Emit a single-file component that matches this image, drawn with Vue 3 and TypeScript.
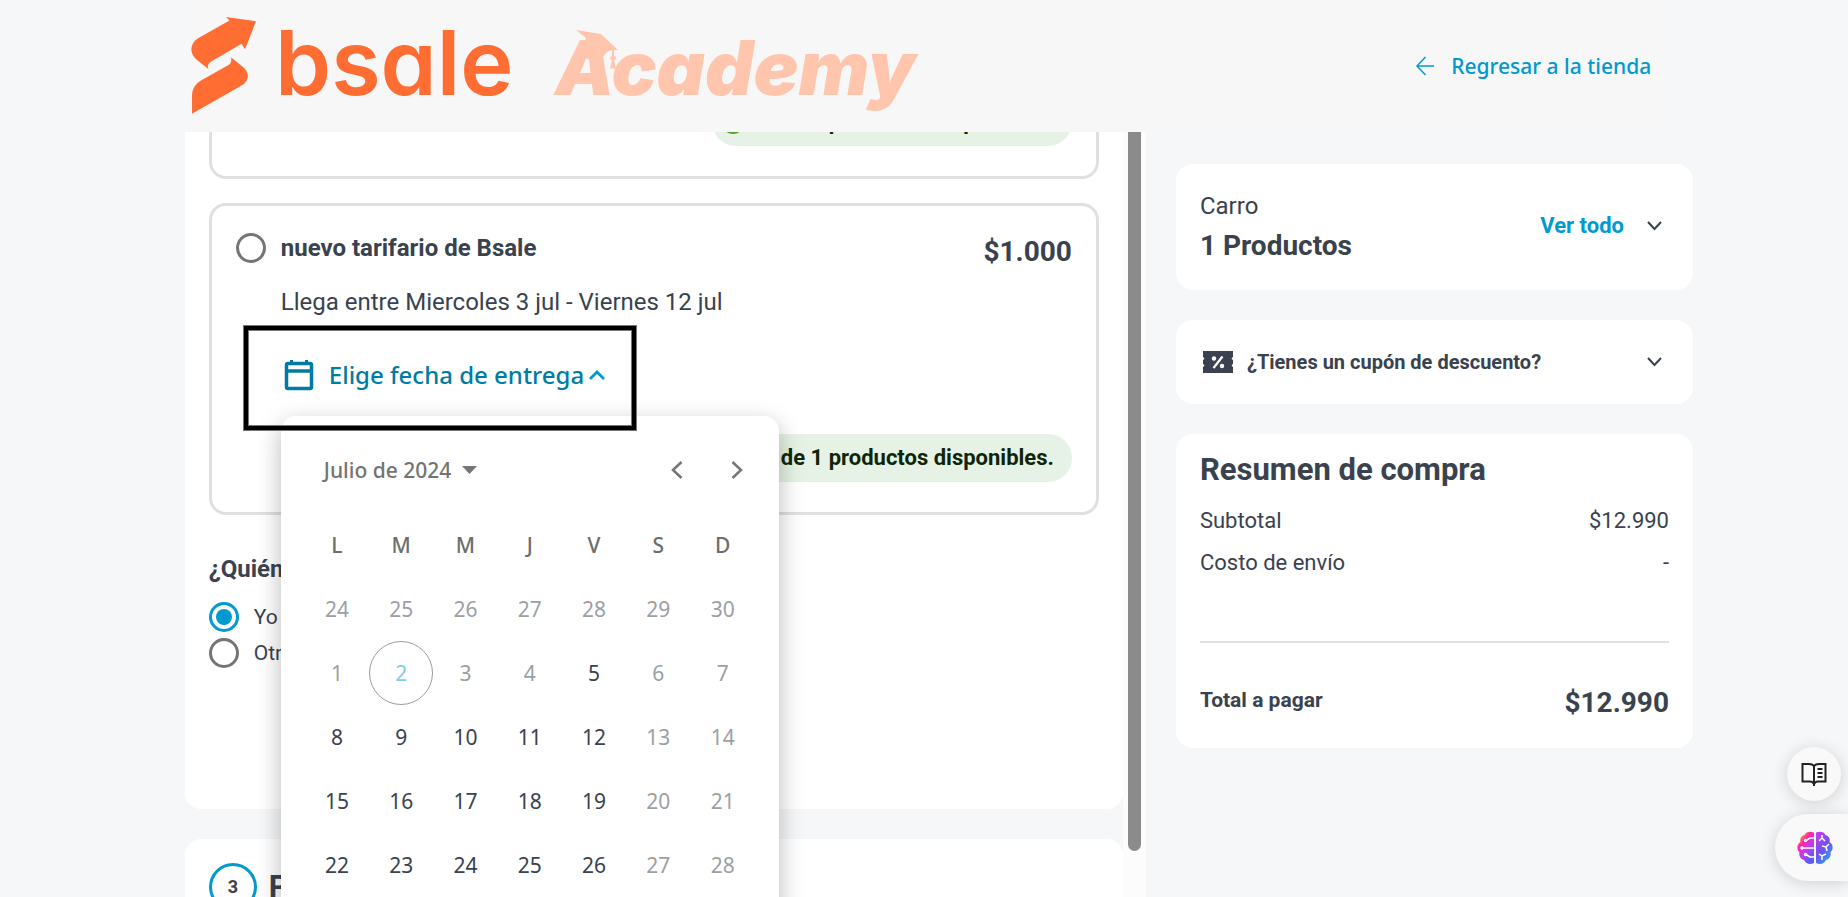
<script setup lang="ts">
import { ref } from 'vue'

interface Day {
  n: number
  enabled: boolean
  today: boolean
}

const weekdays: string[] = ['L', 'M', 'M', 'J', 'V', 'S', 'D']
const available = new Set<number>([5, 8, 9, 10, 11, 12, 15, 16, 17, 18, 19, 22, 23, 24, 25, 26])

const weeks: Day[][] = [
  [24, 25, 26, 27, 28, 29, 30].map((n) => ({ n, enabled: false, today: false })),
  ...[1, 8, 15, 22].map((start) =>
    Array.from({ length: 7 }, (_, i) => {
      const n = start + i
      return { n, enabled: available.has(n), today: n === 2 }
    }),
  ),
]

const receiver = ref<string>('yo')
const rate = ref<string>('')
const open = ref<boolean>(true)
</script>

<template>
  <div class="page">
    <header class="top">
      <svg class="logo" viewBox="0 0 740 132" role="img" aria-label="bsale Academy">
        <g fill="#ff6d33">
          <path d="M41 17L71 21.300L60 49.300L56.600 43.700L27 61C22 64 22.500 67 23.700 69.300L12 60C4.500 54 4 43.500 13.500 38L44.500 20.500Z" />
          <path d="M46 57.300L58 67C65 73 64.500 81 56.500 85.500L7 113.700V97C7 88 10.500 84 16 80.500L43.500 65C46.500 63 46.700 60.500 46 57.300Z" />
          <text class="brand" x="90" y="95">bsale</text>
        </g>
        <g fill="#ffc5ad">
          <text class="academy" x="370" y="95">Academy</text>
          <path d="M391 30L416 34L433 50L428 50C420 51 417 57 417 64L395 56L401 38Z" />
          <path d="M427 50h2v6a2 2 0 0 1 0 4l2 10-3-2-3 1 2-9a2 2 0 0 1 0-4z" />
        </g>
      </svg>
      <a class="back" href="#">
        <svg width="18" height="20" viewBox="0 0 18 20" fill="none" stroke="currentColor" stroke-width="1.500"><path d="M18 10H1M9.500 1L1 10l8.500 9" /></svg>
        Regresar a la tienda
      </a>
    </header>

    <main class="cols">
      <div class="scroller">
        <div class="steps">
          <section class="step delivery">
            <div class="option prev">
              <p class="pill">
                <svg width="24" height="24" viewBox="0 0 24 24"><circle cx="12" cy="12" r="12" fill="#55a02c" /><path d="M6 12l4 4 8-8" fill="none" stroke="#fff" stroke-width="2" /></svg>
                1 de 1 productos disponibles.
              </p>
            </div>
            <div class="option">
              <div class="row">
                <label class="choice">
                  <input v-model="rate" type="radio" name="rate" value="bsale" />
                  <strong>nuevo tarifario de Bsale</strong>
                </label>
                <span class="price">$1.000</span>
              </div>
              <p class="eta">Llega entre Miercoles 3 jul - Viernes 12 jul</p>
              <div class="picker">
                <button class="pick" type="button" :aria-expanded="open" @click="open = !open">
                  <svg width="36" height="36" viewBox="0 0 36 36" fill="none" stroke="#007ba3">
                    <rect x="5.500" y="6.500" width="25" height="25" rx="1.500" stroke-width="3.500" />
                    <path d="M5 14H31" stroke-width="3.500" /><path d="M10.500 3v4M25.500 3v4" stroke-width="3" />
                  </svg>
                  <span>Elige fecha de entrega</span>
                  <svg width="18" height="12" viewBox="0 0 18 12" fill="none" stroke="#0099d0" stroke-width="2.800"><path d="M2 10l7-7 7 7" /></svg>
                </button>
                <div v-if="open" class="calendar">
                  <div class="cal-head">
                    <button class="month" type="button">
                      Julio de 2024
                      <svg width="15" height="8" viewBox="0 0 15 8" fill="#757575"><path d="M0 0h15L7.500 8z" /></svg>
                    </button>
                    <button class="nav" type="button" aria-label="Mes anterior">
                      <svg width="12" height="18" viewBox="0 0 12 18"><path d="M10.500 1L2 9l8.500 8" /></svg>
                    </button>
                    <button class="nav" type="button" aria-label="Mes siguiente">
                      <svg width="12" height="18" viewBox="0 0 12 18"><path d="M1.500 1L10 9l-8.500 8" /></svg>
                    </button>
                  </div>
                  <table>
                    <thead>
                      <tr><th v-for="(d, i) in weekdays" :key="i" scope="col">{{ d }}</th></tr>
                    </thead>
                    <tbody>
                      <tr v-for="(w, i) in weeks" :key="i">
                        <td v-for="d in w" :key="d.n">
                          <button type="button" class="day" :class="{ today: d.today }" :disabled="!d.enabled">{{ d.n }}</button>
                        </td>
                      </tr>
                    </tbody>
                  </table>
                </div>
                <div class="marker"></div>
              </div>
              <p class="pill">
                <svg width="24" height="24" viewBox="0 0 24 24"><circle cx="12" cy="12" r="12" fill="#55a02c" /></svg>
                1 de 1 productos disponibles.
              </p>
            </div>
            <fieldset class="who">
              <legend>¿Quién recibe?</legend>
              <label class="choice small"><input v-model="receiver" type="radio" name="who" value="yo" />Yo</label>
              <label class="choice small"><input v-model="receiver" type="radio" name="who" value="otro" />Otro</label>
            </fieldset>
          </section>
          <section class="step pay">
            <span class="num">3</span>
            <h2>Pago</h2>
          </section>
        </div>
        <div class="track"><div class="thumb"></div></div>
      </div>

      <aside class="side">
        <section class="card cart">
          <div>
            <p class="cart-label">Carro</p>
            <p class="cart-count">1 Productos</p>
          </div>
          <button class="link" type="button">
            Ver todo
            <svg class="chev" width="15" height="10" viewBox="0 0 15 10"><path d="M1 1l6.500 7L14 1" /></svg>
          </button>
        </section>
        <button class="card coupon" type="button">
          <svg width="30" height="22" viewBox="0 0 30 22">
            <path fill="#39424e" d="M0 0H30V6C28.500 7 28 8 30 9V13C28 14 28.500 15 30 16V22H0V16C1.500 15 2 14 0 13V9C2 8 1.500 7 0 6Z" />
            <path d="M10.500 17L19.500 5.500" stroke="#fff" stroke-width="2.200" />
            <circle cx="11" cy="7.500" r="2.200" fill="#fff" /><circle cx="19" cy="15" r="2.200" fill="#fff" />
          </svg>
          <span>¿Tienes un cupón de descuento?</span>
          <svg class="chev" width="15" height="10" viewBox="0 0 15 10"><path d="M1 1l6.500 7L14 1" /></svg>
        </button>
        <section class="card summary">
          <h2>Resumen de compra</h2>
          <p class="line"><span>Subtotal</span><span>$12.990</span></p>
          <p class="line"><span>Costo de envío</span><span>-</span></p>
          <hr />
          <p class="total"><strong>Total a pagar</strong><span class="price">$12.990</span></p>
        </section>
      </aside>
    </main>

    <button class="float book" type="button" aria-label="Modo lectura">
      <svg width="26" height="24" viewBox="0 0 26 24" fill="none" stroke="#222" stroke-width="2">
        <path d="M13 4C11.500 2 10 2 8 2H1.500V19.500H9C11 19.500 12 20 13 22C14 20 15 19.500 17 19.500H24.500V2H18C16 2 14.500 2 13 4ZM13 4V24" />
        <path d="M16.500 7h5M16.500 11h5M16.500 15h5" />
      </svg>
    </button>
    <button class="float brain" type="button" aria-label="Asistente">
      <svg width="36" height="34" viewBox="0 0 36 34">
        <defs>
          <linearGradient id="lobe-left" x1="0" y1="0" x2="0.600" y2="1">
            <stop offset="0.150" stop-color="#ff9a1f" /><stop offset="0.400" stop-color="#fb23b4" /><stop offset="0.620" stop-color="#c63be8" /><stop offset="1" stop-color="#5a5cf5" />
          </linearGradient>
          <linearGradient id="lobe-right" x1="0.200" y1="0" x2="0.800" y2="1">
            <stop offset="0" stop-color="#c53be6" /><stop offset="0.500" stop-color="#6a55f3" /><stop offset="1" stop-color="#28a8f5" />
          </linearGradient>
        </defs>
        <path fill="url(#lobe-left)" d="M17 1.500C13 0 9 .5 7.500 4C4 5 2.500 8 3.500 11C-.5 13 -.5 19 2.500 21C1.500 25 3.500 28 7 29C9 33 13 34 17 32Z" />
        <path fill="url(#lobe-right)" d="M19 1.500C23 0 27 .5 28.500 4C32 5 33.500 8 32.500 11C36.500 13 36.500 19 33.500 21C34.500 25 32.500 28 29 29C27 33 23 34 19 32Z" />
        <g fill="none" stroke="#fff" stroke-width="1.500">
          <path d="M17 7h-4l-4 2.500M17 17H5M17 26h-4l-4-2.500" /><circle cx="8.500" cy="9.500" r="1" /><circle cx="5" cy="17" r="1" /><circle cx="8.500" cy="23.500" r="1" />
          <path d="M22 10l3-3 3 3M25 7V4M25 15l4 1 3-3M29 16l1 4M22 23l3 2 4-2M25 25v4" />
        </g>
      </svg>
    </button>
  </div>
</template>

<style>
body {
  margin: 0;
  background: #f6f7f9;
}
</style>

<style scoped>
.page {
  height: 100vh;
  overflow: hidden;
  position: relative;
  display: flex;
  flex-direction: column;
  background: #f6f7f9;
  color: #39424e;
  font: 400 20px/30px Roboto, "Liberation Sans", sans-serif;
}
* {
  box-sizing: border-box;
}
p,
h2 {
  margin: 0;
}
button {
  font: inherit;
  color: inherit;
  border: 0;
  padding: 0;
  background: none;
  cursor: pointer;
}
.top {
  flex: none;
  height: 132px;
  margin: 0 10%;
  padding: 0 12px 0 0;
  background: #f7f7f7;
  display: flex;
  align-items: center;
  justify-content: space-between;
}
.logo {
  width: 740px;
  height: 132px;
}
.brand {
  font: 600 90px Inter, sans-serif;
  font-feature-settings: "cv11";
}
.academy {
  font: italic 900 75px Inter, sans-serif;
  font-feature-settings: "cv11";
}
.back {
  display: flex;
  align-items: center;
  gap: 17px;
  color: #0099d0;
  font: 500 21px/30px "Noto Sans", sans-serif;
  text-decoration: none;
}
.cols {
  flex: 1;
  min-height: 0;
  margin: 0 155px 0 10%;
  display: grid;
  grid-template-columns: 961fr 517fr;
  gap: 30px;
}
.scroller {
  min-height: 0;
  overflow: hidden;
  display: flex;
}
.steps {
  flex: 1;
  min-width: 0;
}
.track {
  width: 23px;
  padding: 0 5px;
  background: #fcfcfc;
}
.thumb {
  height: 94%;
  border-radius: 0 0 8px 8px;
  background: #8b8b8b;
}
.step {
  background: #fff;
  border-radius: 16px;
  padding: 24px;
}
.delivery {
  margin-top: -61px;
  padding-bottom: 141px;
}
.option {
  border: 3px solid #e0e0e0;
  border-radius: 17px;
  padding: 27px 24px 30px;
  display: flex;
  flex-direction: column;
}
.prev {
  padding-top: 0;
  margin-bottom: 24px;
}
.row {
  display: flex;
  justify-content: space-between;
  align-items: flex-start;
}
.row .price {
  line-height: 38px;
}
.choice {
  display: flex;
  align-items: center;
  gap: 15px;
  font-size: 24px;
}
.small {
  font-size: 21px;
}
input[type="radio"] {
  appearance: none;
  width: 30px;
  height: 30px;
  margin: 0;
  padding: 4px;
  border: 3px solid #757575;
  border-radius: 50%;
}
input[type="radio"]:checked {
  border-color: #0099d0;
  background: #0099d0 content-box;
}
.price {
  font-size: 28px;
  line-height: 36px;
  font-weight: 700;
}
.eta {
  margin: 13px 0 31px 45px;
  font-size: 24px;
  line-height: 36px;
}
.picker {
  position: relative;
  margin: 0 0 35px 45px;
}
.pick {
  height: 48px;
  display: flex;
  align-items: center;
  color: #007ba3;
  font: 500 24px/36px "Noto Sans", sans-serif;
}
.pick span {
  margin: 0 4px 0 12px;
}
.calendar {
  position: absolute;
  z-index: 2;
  top: 65px;
  left: 0;
  width: 498px;
  padding: 24px;
  border-radius: 15px;
  background: #fff;
  box-shadow: 0 8px 24px rgba(0, 0, 0, 0.28);
  font: 400 21px/30px "Noto Sans", sans-serif;
}
.cal-head {
  display: flex;
  align-items: center;
  height: 60px;
  margin: 0 -12px 12px 19px;
  color: #737373;
}
.month {
  margin-right: auto;
  display: flex;
  align-items: center;
  gap: 11px;
  font-weight: 500;
}
.nav {
  width: 60px;
  height: 60px;
  display: grid;
  place-items: center;
}
.nav path {
  fill: none;
  stroke: #757575;
  stroke-width: 2.5;
}
table {
  width: 100%;
  table-layout: fixed;
  border-collapse: collapse;
}
th {
  height: 65px;
  padding: 0;
  color: #6d6d6d;
  font-weight: 500;
}
td {
  padding: 0;
  text-align: center;
}
.day {
  width: 64px;
  height: 64px;
  display: block;
  margin: 0 auto;
  border-radius: 50%;
}
.day:disabled {
  color: #9c9fa5;
}
.day.today {
  color: #80cce8;
  border: 1px solid #9c9c9f;
}
.marker {
  position: absolute;
  z-index: 3;
  left: -38px;
  top: -26px;
  width: 394px;
  height: 106px;
  border: 5px solid #000;
  box-shadow: inset 0 0 0 1px #777;
  outline: 1px solid #777;
  outline-offset: -1px;
  pointer-events: none;
}
.pill {
  align-self: flex-end;
  height: 48px;
  padding: 0 18px 0 9px;
  border-radius: 24px;
  display: flex;
  align-items: center;
  gap: 18px;
  background: #e6f2e6;
  color: #0f2606;
  font-size: 22px;
  font-weight: 700;
}
.who {
  margin: 0;
  padding: 36px 0 0;
  border: 0;
  display: flex;
  flex-direction: column;
  gap: 6px;
}
.who legend {
  float: left;
  padding: 0;
  margin-bottom: 9px;
  font-size: 24px;
  line-height: 36px;
  font-weight: 700;
}
.pay {
  margin-top: 30px;
  min-height: 200px;
  display: flex;
  gap: 12px;
}
.num {
  width: 48px;
  height: 48px;
  border: 3px solid #0099d0;
  border-radius: 50%;
  display: grid;
  place-items: center;
  font-size: 18px;
  font-weight: 700;
}
h2 {
  font-size: 31px;
  line-height: 48px;
  font-weight: 700;
}
.side {
  padding-top: 32px;
  display: flex;
  flex-direction: column;
  gap: 30px;
}
.card {
  border-radius: 17px;
  background: #fff;
  padding: 24px;
}
.cart {
  display: flex;
  align-items: center;
  justify-content: space-between;
  padding: 22px 31px 24px 24px;
}
.cart-label {
  font-size: 24px;
  line-height: 40px;
}
.cart-count {
  font-size: 28px;
  line-height: 40px;
  font-weight: 700;
}
.link {
  display: flex;
  align-items: center;
  gap: 23px;
  color: #0099d0;
  font-size: 22px;
  font-weight: 700;
}
.chev path {
  fill: none;
  stroke: #39424e;
  stroke-width: 2;
}
.coupon {
  height: 84px;
  padding: 0 31px 0 27px;
  display: flex;
  align-items: center;
  gap: 14px;
  font-size: 20px;
  font-weight: 700;
}
.coupon span {
  margin-right: auto;
}
.summary {
  padding: 12px 24px 27px;
}
.line {
  display: flex;
  justify-content: space-between;
  margin-top: 12px;
  font-size: 22px;
}
hr {
  margin: 63px 0 42px;
  border: 0;
  height: 2px;
  background: #e0e0e0;
}
.total {
  display: flex;
  justify-content: space-between;
  font-size: 21px;
}
.float {
  position: absolute;
  display: grid;
  place-items: center;
  background: #f9f9f9;
  box-shadow: 0 2px 16px rgba(0, 0, 0, 0.16);
}
.book {
  right: 7px;
  bottom: 96px;
  width: 54px;
  height: 54px;
  border-radius: 50%;
}
.brain {
  right: 0;
  bottom: 16px;
  width: 73px;
  height: 67px;
  padding-left: 6px;
  border-radius: 34px 0 0 34px;
}
</style>
